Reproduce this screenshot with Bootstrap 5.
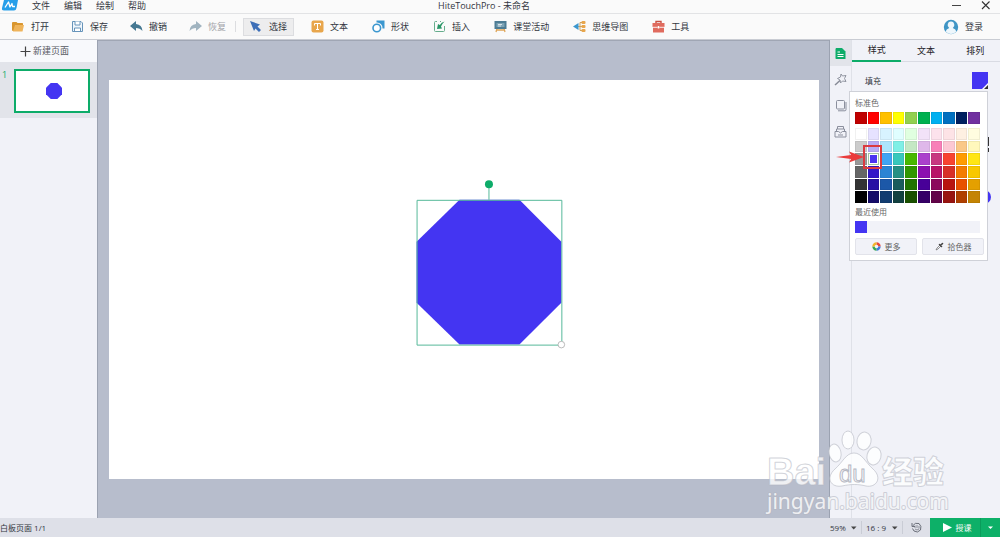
<!DOCTYPE html>
<html lang="zh-CN">
<head>
<meta charset="utf-8">
<meta name="viewport" content="width=device-width, initial-scale=1">
<title>HiteTouchPro - 未命名</title>
<link href="https://cdn.jsdelivr.net/npm/bootstrap@5.3.0/dist/css/bootstrap.min.css" rel="stylesheet">
<style>
  :root { --green: #0dac69; --ink: #33373f; --panel: #f1f2f8; --bar: #dee0e8; --brand: #4435f2; }
  body { font: 9px/12px "Open Sans", "Noto Sans CJK SC", sans-serif; color: var(--ink); background: var(--panel); }
  button, select, a { font: inherit; color: inherit; text-decoration: none; }
  button { background: none; border: 0; padding: 0; }
  svg { display: block; flex: none; }
  .title-bar { height: 14px; padding-bottom: 2px; background: #fafafa; border-bottom: 1px solid #e2e3e5; }
  .side { flex: 1 1 0; }
  .menu-links { gap: 14px; margin-left: 12px; }
  .doc-title { margin-right: 24px; }
  .tool-bar { height: 26px; background: #fafafa; border-bottom: 1px solid #c9ccd3; padding-left: 5px; }
  .tool { display: flex; align-items: center; gap: 6px; height: 18px; padding: 0 6px; border: 1px solid transparent; white-space: nowrap; }
  .tool.active { background: #ededee; border-color: #dcdde0; }
  .tool:disabled { color: #a3a5aa; }
  .tool-sep { width: 1px; height: 11px; background: #dcdde0; margin: 0 7px 0 2px; }
  .pages { width: 98px; border-right: 1px solid #9ba2b1; background: var(--panel); }
  .new-page { height: 22px; gap: 2px; background: #f8f9fc; color: #55585f; }
  .page-item { background: #e2e4ea; padding: 7px 7px 5px 2px; gap: 7px; color: var(--green); }
  .thumb { flex: 1; border: 2px solid var(--green); background: #fff; aspect-ratio: 76 / 44; }
  .stage { background: #b7bdcc; padding: 39px 10px 0 11px; min-width: 0; border-top: 1px solid #a0a6b4; }
  .sheet { width: 100%; height: auto; background: #fff; overflow: visible; }
  .rail { width: 23px; border-left: 1px solid #9ba2b1; border-right: 1px solid #dfe1e8; }
  .rail button { height: 26px; display: flex; align-items: center; justify-content: center; }
  .rail .current { background: #e2e4ea; }
  .props { width: 148px; }
  .tabs { height: 22px; }
  .tabs button { flex: 1; border-bottom: 1px solid #d9dbe3; color: #1f2229; }
  .tabs .current { border-bottom: 2px solid var(--green); }
  .fill-row { padding: 10px 12px 0 13px; font-size: 8px; }
  .fill-chip { width: 16px; height: 17px; background: var(--brand); }
  .popup { position: absolute; top: 51px; right: 12px; width: 139px; background: #fff; border: 1px solid #cfd1d8; padding: 5px 3px 5px 5px; color: #666; font-size: 8px; z-index: 2; }
  .swatches { display: grid; grid-template-columns: repeat(10, 1fr); gap: 1px; width: 125px; }
  .swatches button { min-height: 0; border: 1px solid #0000000f; }
  .standard { height: 12px; margin: 3px 0 4px; }
  .palette { height: 75px; grid-template-rows: repeat(6, 1fr); }
  .swatches .chosen { border: 1px solid #a3c4a0; box-shadow: inset 0 0 0 1px #fff; }
  .recent { width: 125px; height: 12px; background: var(--panel); }
  .recent button { width: 12px; height: 12px; background: var(--brand); }
  .soft-btn { flex: 1; display: flex; align-items: center; justify-content: center; gap: 4px; height: 17px; background: var(--panel); border: 1px solid #e2e3ea; border-radius: 2px; }
  .callout { position: absolute; top: 105px; right: 117px; z-index: 3; }
  .behind { position: absolute; top: 95px; right: 8px; }
  .status-bar { height: 19px; background: var(--bar); font-size: 8px; }
  .status-bar select { appearance: none; border: 0; background: none; padding: 0; outline: 0; }
  .pick { gap: 4px; padding: 0 4px; border-right: 1px solid #c9ccd5; height: 13px; }
  .pick select { width: 17px; }
  .pick .ratio { width: 22px; }
  .teach { background: #0db068; color: #fff; width: 70px; }
  .teach-more { width: 20px; border-left: 1px solid #0a9c5b; }
  .watermark { position: absolute; right: 46px; bottom: 20px; z-index: 4; pointer-events: none; }
</style>
</head>
<body class="vh-100 d-flex flex-column overflow-hidden position-relative">

<header class="title-bar d-flex align-items-center">
  <div class="side d-flex align-items-center">
    <svg width="20" height="12" viewBox="0 0 20 12"><path d="M4 0H18L16.500 8Q16 10.500 14 10.500H4Q1.500 10.500 2 8Z" fill="#279fe9"/><path d="M5 7.500L8.500 2L10 7L12 3.500L12.500 6.500H15" fill="none" stroke="#fff" stroke-width="1.300" stroke-linejoin="round"/></svg>
    <nav class="menu-links d-flex"><a href="#">文件</a><a href="#">编辑</a><a href="#">绘制</a><a href="#">帮助</a></nav>
  </div>
  <div class="doc-title">HiteTouchPro - 未命名</div>
  <div class="side d-flex justify-content-end align-items-center gap-3 pe-2">
    <button aria-label="最小化"><svg width="12" height="11" viewBox="0 0 12 11"><path d="M0 5.500H9" stroke="#444"/></svg></button>
    <button aria-label="关闭"><svg width="12" height="11" viewBox="0 0 12 11"><path d="M2 1.500L9.500 9M9.500 1.500L2 9" stroke="#333" stroke-width="1.100"/></svg></button>
  </div>
</header>

<div class="tool-bar d-flex align-items-center">
  <div class="d-flex gap-2">
    <button class="tool"><svg width="13" height="13" viewBox="0 0 13 13"><path d="M0 3Q0 2 1 2H4.500L5.500 3H10.500Q11 3 11 4V5H4L2 11H1Q0 11 0 10Z" fill="#d9962f"/><path d="M3 5H12L10.500 11.500H1Z" fill="#efb45b"/></svg>打开</button>
    <button class="tool"><svg width="13" height="13" viewBox="0 0 13 13"><path d="M1.500 1.500H10L11.500 3V11.500H1.500Z" fill="#eef5fb" stroke="#6794ba"/><path d="M4 1.500V5H9V1.500M3.500 11V8H9.500V11" fill="#fff" stroke="#6794ba"/></svg>保存</button>
    <button class="tool"><svg width="13" height="13" viewBox="0 0 13 13"><path d="M0 6L6 1V4Q12 4.500 12.500 11Q10 8 6 8V11Z" fill="#457892"/></svg>撤销</button>
    <button class="tool" disabled><svg width="13" height="13" viewBox="0 0 13 13"><path d="M13 6L7 1V4Q1 4.500 .5 11Q3 8 7 8V11Z" fill="#a1b4c0"/></svg>恢复</button>
  </div>
  <span class="tool-sep"></span>
  <div class="d-flex" style="gap:10px">
    <button class="tool active" aria-pressed="true"><svg width="13" height="13" viewBox="0 0 13 13"><path d="M0 1L10 4.500L7.500 6.500L11 10L9 12L5.500 8.500L4 11Z" fill="#3d6fb8"/></svg>选择</button>
    <button class="tool"><svg width="13" height="13" viewBox="0 0 13 13"><rect x=".5" y=".5" width="12" height="12" rx="2" fill="#e8a64c"/><path d="M3.500 5.500V3.500H9.500V5.500M6.500 3.500V9.500M5 9.500H8" fill="none" stroke="#fff"/></svg>文本</button>
    <button class="tool"><svg width="13" height="13" viewBox="0 0 13 13"><path d="M4.500 .5H12.500V8.500H10.500A5.500 5.500 0 0 0 4.500 2.500Z" fill="#3b97cf"/><circle cx="4.800" cy="8" r="3.800" fill="#fff" stroke="#3b97cf" stroke-width="1.600"/></svg>形状</button>
    <button class="tool"><svg width="13" height="13" viewBox="0 0 13 13"><path d="M4 1.500H2.500Q1.500 1.500 1.500 2.500V10.500Q1.500 11.500 2.500 11.500H10.500Q11.500 11.500 11.500 10.500V6M7 1.500H8" fill="none" stroke="#65ad8c"/><path d="M11.500 1.500Q8.500 2 6.800 5L5 4L4 9L9 8.500L8 6.500Q9 4 11.500 1.500Z" fill="#299667"/></svg>插入</button>
    <button class="tool"><svg width="13" height="13" viewBox="0 0 13 13"><path d="M3 8.500L2 12M10 8.500L11 12M2 10H11" stroke="#dfa65a" stroke-width="1.300"/><path d="M.5 1H12.500V9H.5Z" fill="#4d7c94"/><path d="M2.500 3H10.500V7H2.500Z" fill="#7ca3b5"/><path d="M4 4.500H8M4 6H7" stroke="#fff" stroke-width=".7"/></svg>课堂活动</button>
    <button class="tool"><svg width="13" height="13" viewBox="0 0 13 13"><path d="M3 6.500H9M9.500 2.500H7V10.500H9.500" fill="none" stroke="#cda15c"/><path d="M0 6.500L5.500 3V10Z" fill="#3b97cf"/><g fill="#e8a64c"><rect x="8.500" y="1" width="4" height="3" rx="1"/><rect x="8.500" y="5" width="4" height="3" rx="1"/><rect x="8.500" y="9" width="4" height="3" rx="1"/></g></svg>思维导图</button>
    <button class="tool"><svg width="13" height="13" viewBox="0 0 13 13"><path d="M4 3.500V1.500H9V3.500" fill="none" stroke="#c94f42" stroke-width="1.400"/><path d="M.5 3H12.500V7H.5ZM1 7.500H12V12.500H1Z" fill="#e06b5e"/><path d="M.5 7.200H5M8 7.200H12.500" stroke="#fff" stroke-width=".6"/><rect x="5.700" y="6" width="1.600" height="2.500" fill="#fff"/></svg>工具</button>
  </div>
  <a href="#" class="ms-auto d-flex align-items-center" style="gap:6px;padding-right:17px"><svg width="16" height="16" viewBox="0 0 16 16"><circle cx="8" cy="8" r="7.200" fill="#3f95c5"/><path d="M8 2.500A3.200 3.500 0 0 0 6.200 9Q3 10 2.700 12.500Q5 15 8 15T13.300 12.500Q13 10 9.800 9A3.200 3.500 0 0 0 8 2.500Z" fill="#eef7fc"/></svg>登录</a>
</div>

<main class="d-flex flex-grow-1 position-relative" style="min-height:0">
  <aside class="pages">
    <button class="new-page w-100 d-flex align-items-center justify-content-center pe-3"><svg class="ms-2" width="11" height="11" viewBox="0 0 11 11"><path d="M5.500 .5V10.500M.5 5.500H10.500" stroke="#444" stroke-width="1.200"/></svg>新建页面</button>
    <div class="page-item d-flex"><span>1</span><button class="thumb d-flex align-items-center justify-content-center" aria-label="页面 1"><svg class="ms-1" width="16" height="16" viewBox="0 0 145 145"><path d="M43 0H103L145 42V103L103 145H43L0 103V42Z" fill="#4435f2"/></svg></button></div>
  </aside>

  <section class="stage flex-grow-1">
    <svg class="sheet" viewBox="0 0 711 400" role="img" aria-label="八边形">
      <path d="M351 120H411L453 162V223L411 265H351L308 223V162Z" fill="#4435f2"/>
      <path d="M308.500 120.500H453.500V265.500H308.500ZM380.500 120V106" fill="none" stroke="#55b99a"/>
      <circle cx="380.500" cy="104.500" r="4" fill="#0dac69"/>
      <circle cx="453" cy="265" r="3.300" fill="#fff" stroke="#aaa" stroke-width=".8"/>
    </svg>
  </section>

  <nav class="rail d-flex flex-column">
    <button class="current" aria-label="样式"><svg width="11" height="13" viewBox="0 0 11 13"><path d="M1 1H7L10.500 4.500V12H1Q.5 12 .5 11V2Z" fill="#0dac69"/><path d="M2.500 5H5M2.500 7.500H8.500M2.500 9.500H8.500" stroke="#fff"/></svg></button>
    <button aria-label="动画"><svg width="13" height="13" viewBox="0 0 13 13" fill="none" stroke="#878b97" stroke-width=".9"><path d="M7 1L8.500 3L12 2.500L10.500 5.500L12 8.500L8.500 8L6.500 10L6 7L3.500 5.500L6.500 4Z"/><path d="M6 7.500L1 12" stroke-width="1.500"/></svg></button>
    <button aria-label="页面"><svg width="12" height="13" viewBox="0 0 12 13" fill="none" stroke="#8b8f9d"><rect x="1.500" y="1.500" width="8" height="8.500" rx="1"/><path d="M11 3V10.500Q11 11.800 10 11.800H3"/></svg></button>
    <button aria-label="资源"><svg width="13" height="13" viewBox="0 0 13 13" fill="none" stroke="#8b8f9d"><path d="M3.500 4V1.500H9.500V4M2.500 6V4H10.500V6M1 6.500H4.500L6.500 8L8.500 6.500H12V12H1ZM4 10H9"/></svg></button>
  </nav>

  <aside class="props">
    <div class="tabs d-flex" role="tablist"><button class="current" role="tab" aria-selected="true">样式</button><button role="tab">文本</button><button role="tab">排列</button></div>
    <div class="fill-row d-flex justify-content-between align-items-center"><span>填充</span><button class="fill-chip" aria-label="填充颜色"><svg width="16" height="17" viewBox="0 0 16 17"><path d="M10 17L16 11V17Z" fill="#fff"/><path d="M12 17L16 13V17Z" fill="#333"/></svg></button></div>
  </aside>

  <svg class="behind" width="12" height="72" viewBox="0 0 12 72"><path d="M8.500 2V11M8.500 13V17" stroke="#333"/><circle cx="4" cy="62" r="7" fill="#4435f2"/></svg>

  <div class="popup">
    <div>标准色</div>
    <div class="swatches standard" id="standard"></div>
    <div class="swatches palette" id="palette"></div>
    <div style="margin:3px 0">最近使用</div>
    <div class="recent d-flex"><button aria-label="#4435f2"></button></div>
    <div class="d-flex" style="gap:5px;margin-top:5px">
      <button class="soft-btn"><svg width="9" height="9" viewBox="0 0 9 9" fill="none" stroke-width="2.400"><path d="M4.500 1.500A3 3 0 0 1 7.500 4.500" stroke="#e8483c"/><path d="M7.500 4.500A3 3 0 0 1 4.500 7.500" stroke="#3d7be0"/><path d="M4.500 7.500A3 3 0 0 1 1.500 4.500" stroke="#37a852"/><path d="M1.500 4.500A3 3 0 0 1 4.500 1.500" stroke="#f2b42e"/></svg>更多</button>
      <button class="soft-btn"><svg width="9" height="9" viewBox="0 0 9 9"><path d="M1 8L2 6L5 3L6 4L3 7Z" fill="none" stroke="#777" stroke-width=".8"/><path d="M4.500 2.500L6.500 4.500M5.500 3.500L7.500 1.500" stroke="#444" stroke-width="1.600" stroke-linecap="round"/></svg>拾色器</button>
    </div>
  </div>

  <svg class="callout" width="47" height="25" viewBox="0 0 47 25"><rect x="28" y="1" width="17" height="22" fill="none" stroke="#dc3a40" stroke-width="2"/><path d="M0 12L15 10L13 6.500L28 12L13 17.500L15 14Z" fill="#ea3c3c"/></svg>
</main>

<footer class="status-bar d-flex align-items-center">
  <span>白板页面 1/1</span>
  <div class="ms-auto d-flex align-items-center h-100">
    <label class="pick d-flex align-items-center"><select aria-label="缩放"><option>59%</option></select><svg width="6" height="4" viewBox="0 0 6 4"><path d="M0 .5H5.500L2.700 3.500Z" fill="#444"/></svg></label>
    <label class="pick d-flex align-items-center"><select class="ratio" aria-label="比例"><option>16 : 9</option></select><svg width="6" height="4" viewBox="0 0 6 4"><path d="M0 .5H5.500L2.700 3.500Z" fill="#444"/></svg></label>
    <button class="px-2" aria-label="恢复视图"><svg width="11" height="11" viewBox="0 0 11 11" fill="none" stroke="#6b6f7a"><path d="M1 1V4.500H4M1.500 4Q4 0 8 1.500Q11 4 9.500 8Q6.500 11.500 3 9L1.500 6.500"/><path d="M4 6V3.500M6 6V3M8 6.500V4M4 7Q6 9 8 7" stroke-width=".7"/></svg></button>
    <div class="teach d-flex h-100">
      <button class="flex-grow-1 d-flex align-items-center justify-content-center" style="gap:4px"><svg class="ms-1" width="9" height="9" viewBox="0 0 9 9"><path d="M0 0L9 4.500L0 9Z" fill="#fff"/></svg>授课</button>
      <button class="teach-more d-flex align-items-center justify-content-center" aria-label="更多授课选项"><svg width="5" height="4" viewBox="0 0 5 4"><path d="M0 .5H5L2.500 3Z" fill="#fff"/></svg></button>
    </div>
  </div>
</footer>

<svg class="watermark" width="190" height="90" viewBox="0 0 190 90" aria-hidden="true">
  <g fill="#fff" fill-opacity=".8" stroke="#b4b7c2" stroke-opacity=".6" stroke-width="1" stroke-linejoin="round">
    <text x="3" y="58" font-family="Liberation Sans" font-weight="700" font-size="38">Bai</text>
    <path d="M90 26C98 26 101 35 109 42C119 51 112 61 102 59C94 57 87 57 78 59C67 61 61 51 71 42C79 35 82 26 90 26Z"/>
    <ellipse cx="71" cy="26" rx="6" ry="9" transform="rotate(-12 71 26)"/>
    <ellipse cx="84" cy="13" rx="6" ry="9"/>
    <ellipse cx="100" cy="14" rx="7" ry="9" transform="rotate(10 100 14)"/>
    <ellipse cx="110" cy="29" rx="7" ry="9" transform="rotate(14 110 29)"/>
    <text x="118" y="56" font-family="Noto Sans CJK SC" font-weight="900" font-size="31">经验</text>
    <text x="3" y="82" font-family="Noto Sans" font-size="21" stroke-width="2" paint-order="stroke">jingyan.baidu.com</text>
  </g>
  <text x="75" y="55" font-family="Liberation Sans" font-size="24" fill="#f4f5f9" stroke="#b4b7c2" stroke-width=".9">du</text>
</svg>

<script src="https://cdn.jsdelivr.net/npm/bootstrap@5.3.0/dist/js/bootstrap.bundle.min.js"></script>
<script>
  const standard = 'c00000 ff0000 ffc000 ffff00 92d050 00b050 00b0f0 0070c0 002060 7030a0';
  const palette = `ffffff e6e2ff d8f3ff e0feff e0ffe0 f2e2f8 fce2ec fde3e6 fef0e2 fffde0
    cccccc b9acf6 ade4fc 80efe6 c4e8c4 dfb8ea f880b8 fcc8d4 fac888 fff8bc
    999999 4a33f0 40a4f4 38c8bc 48b800 ab40cc c83880 f84430 ff9c00 ffe614
    666666 3316c8 2c84d4 269084 309800 8c10b0 b81468 d83028 f47c00 f8c800
    333333 2810a4 1c58a8 1a5c5c 207400 480098 8c085c b81410 e85000 e4a000
    000000 150c68 123c70 124040 1a5000 360066 620448 981410 b04000 c48404`;
  function fill(id, colors) {
    const box = document.getElementById(id);
    colors.trim().split(/\s+/).forEach(c => {
      const b = document.createElement('button');
      b.style.backgroundColor = '#' + c;
      b.setAttribute('aria-label', '#' + c);
      if (c === '4a33f0') b.className = 'chosen';
      box.append(b);
    });
  }
  fill('standard', standard);
  fill('palette', palette);
</script>
</body>
</html>
